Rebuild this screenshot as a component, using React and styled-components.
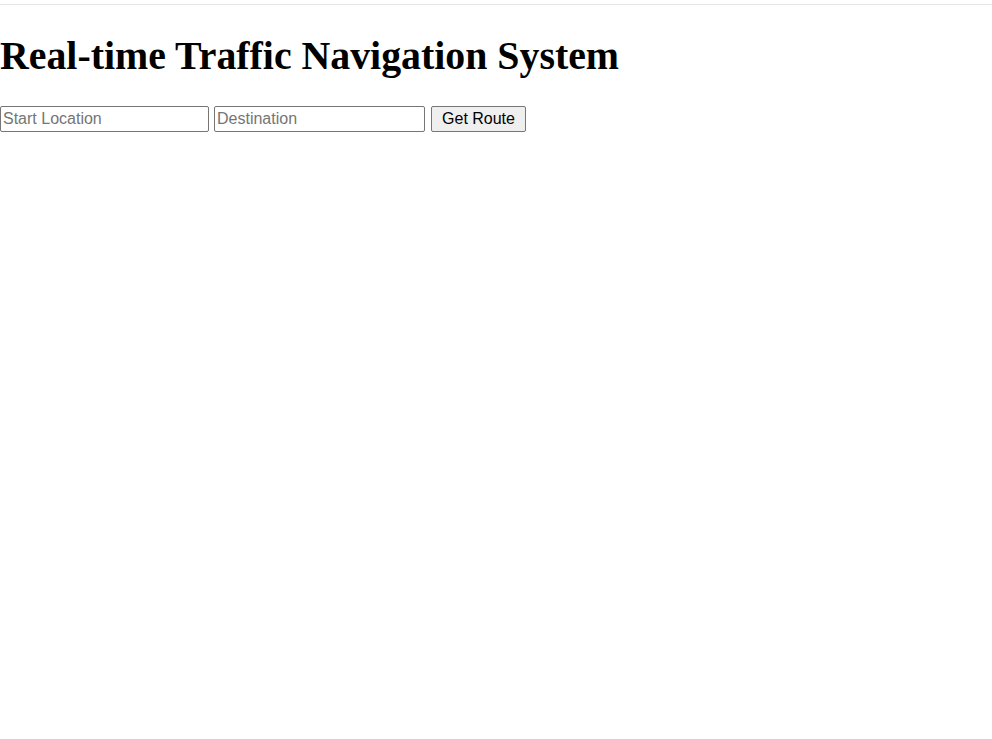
import React from 'react';
import styled, { createGlobalStyle } from 'styled-components';

const GlobalStyle = createGlobalStyle`
  body {
    margin: 0;
    background: #ffffff;
    font-family: "Liberation Serif", "Times New Roman", serif;
  }
`;

const Page = styled.div`
  border-top: 1px solid #e6e6e6;
  margin-top: 4px;
`;

const Title = styled.h1`
  font-family: "Liberation Serif", "Times New Roman", serif;
  font-size: 39.85px;
  font-weight: bold;
  color: #000;
  margin: 28px 0 27px 0;
  line-height: 1.15;
`;

const Form = styled.div`
  display: flex;
  align-items: center;
  gap: 5px;
`;

const Field = styled.input`
  width: ${(p) => p.$width}px;
  height: 26px;
  box-sizing: border-box;
  padding: 1px 2px;
  border: 1px solid #767676;
  border-radius: 2px;
  font-family: "Liberation Sans", Arial, sans-serif;
  font-size: 16px;
  color: #000;
  &::placeholder {
    color: #757575;
  }
`;

const Button = styled.button`
  width: 95px;
  height: 26px;
  margin-left: 1px;
  box-sizing: border-box;
  padding: 1px 6px;
  border: 1px solid #767676;
  border-radius: 2px;
  background: #efefef;
  font-family: "Liberation Sans", Arial, sans-serif;
  font-size: 16px;
  color: #000;
`;

export default function App() {
  return (
    <Page>
      <GlobalStyle />
      <Title>Real-time Traffic Navigation System</Title>
      <Form>
        <Field $width={209} placeholder="Start Location" />
        <Field $width={211} placeholder="Destination" />
        <Button>Get Route</Button>
      </Form>
    </Page>
  );
}
